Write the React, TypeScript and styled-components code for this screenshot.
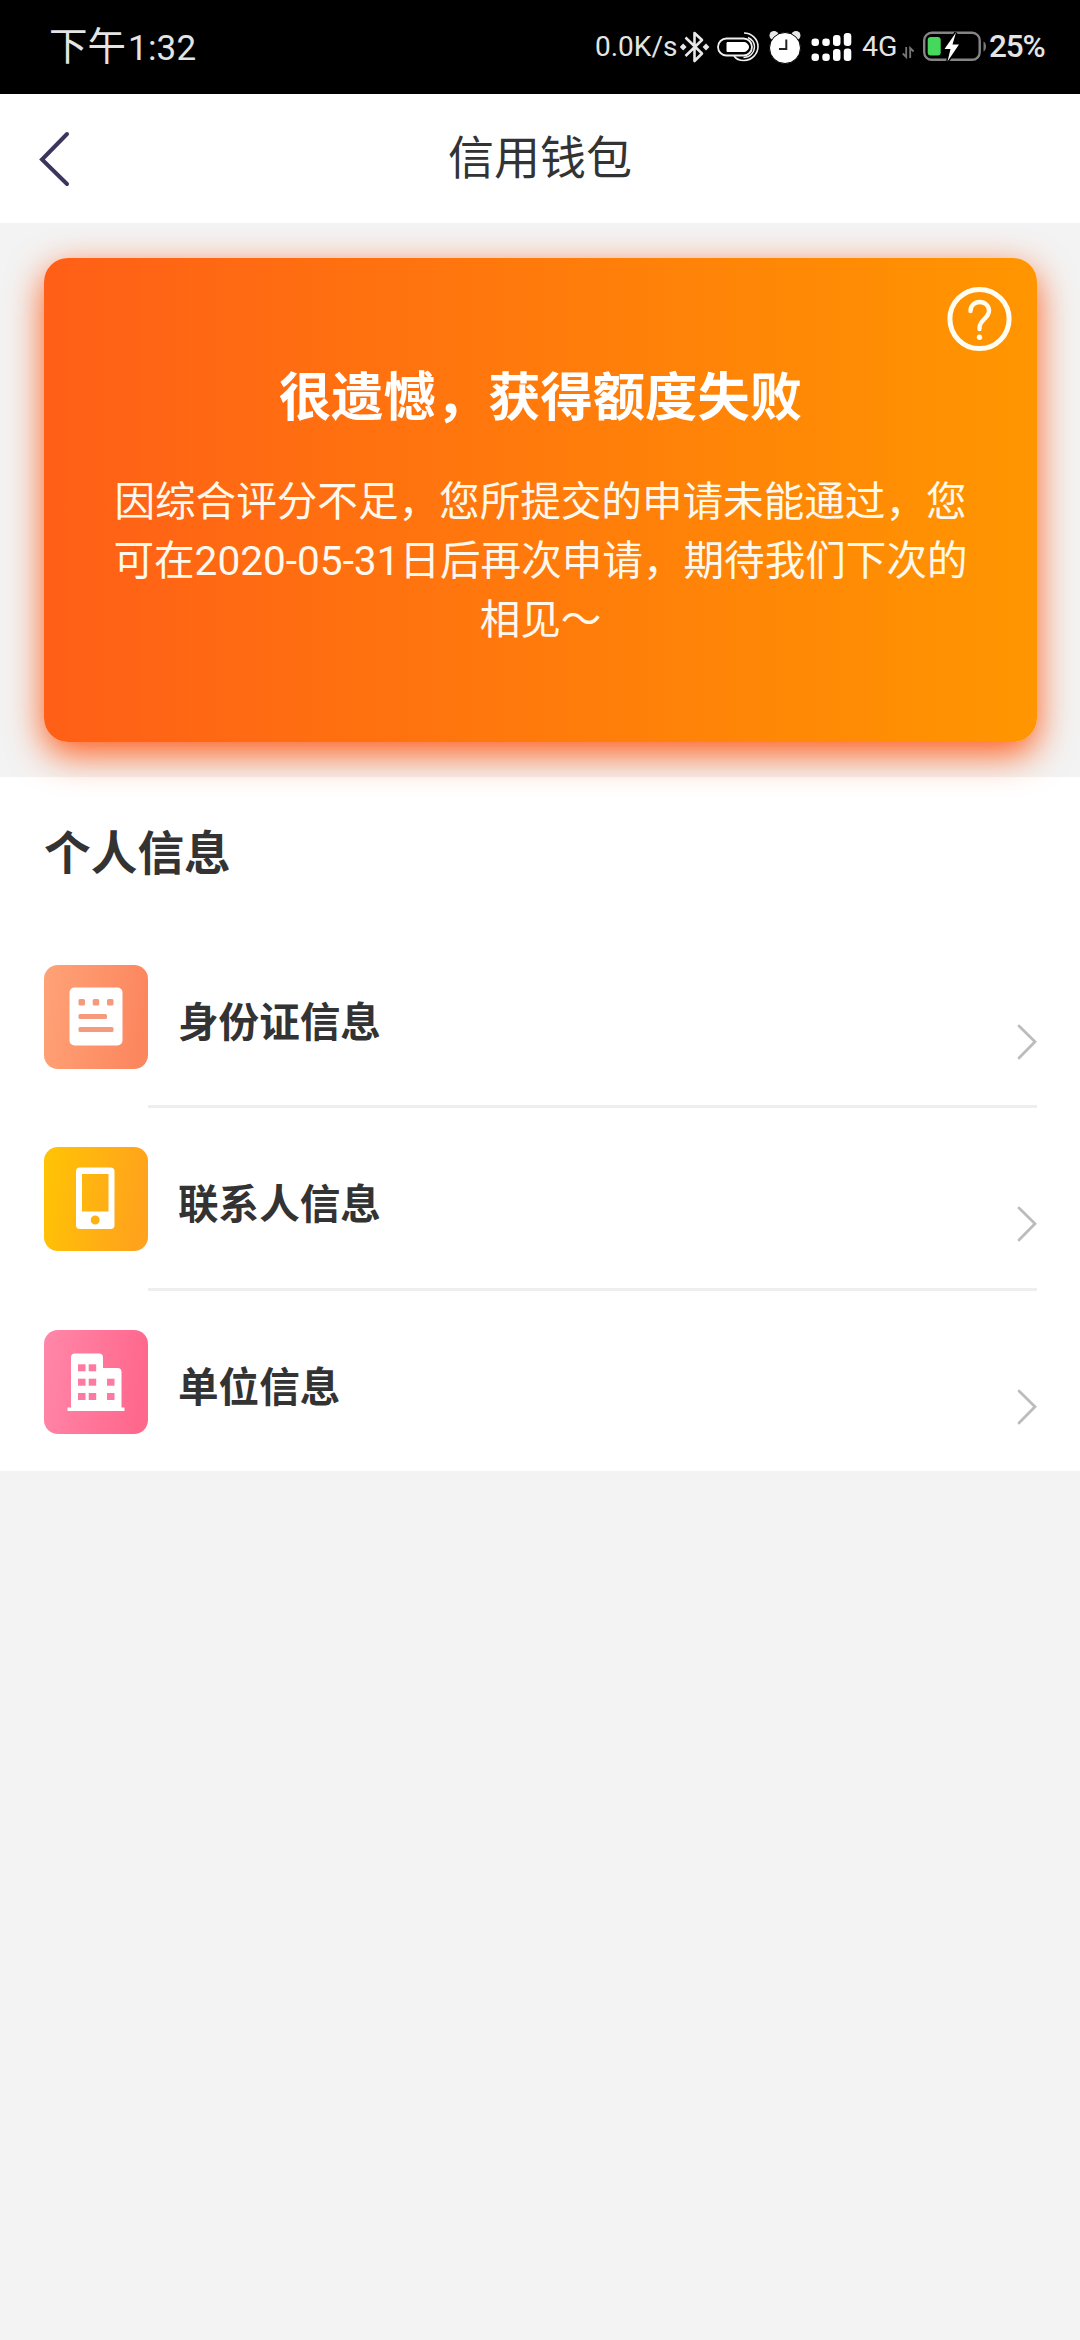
import React from 'react';
import styled, { createGlobalStyle } from 'styled-components';

const GlobalStyle = createGlobalStyle`
  * { box-sizing: border-box; }
  body {
    margin: 0;
    background: #f3f3f3;
    font-family: Roboto, "Noto Sans CJK SC", sans-serif;
    color: #333;
  }
  svg { display: block; flex: none; }
`;

const Page = styled.div`
  display: flex;
  flex-direction: column;
  width: 1080px;
  min-height: 2340px;
  background: #f3f3f3;
`;

const StatusBar = styled.header`
  display: flex;
  align-items: center;
  justify-content: space-between;
  height: 94px;
  padding: 0 37px 0 49px;
  background: #000;
  color: #e4e4e4;
  white-space: nowrap;
`;

const Clock = styled.div`
  display: flex;
  align-items: baseline;
  padding-top: 2px;
  font-size: 38.5px;
  line-height: 50px;
`;

const ClockDigits = styled.span`
  margin-left: 2px;
  font-size: 35px;
  letter-spacing: 0.2px;
`;

const StatusItems = styled.div`
  display: flex;
  align-items: center;
  height: 94px;
`;

const StatusText = styled.span<{ $width: number; $size: number; $weight?: number; $spacing?: number }>`
  width: ${(p) => p.$width}px;
  font-size: ${(p) => p.$size}px;
  font-weight: ${(p) => p.$weight ?? 400};
  letter-spacing: ${(p) => p.$spacing ?? 0}px;
  line-height: 94px;
`;

const NavBar = styled.nav`
  display: grid;
  grid-template-columns: 110px 1fr 110px;
  align-items: center;
  height: 129px;
  background: #fff;
`;

const BackButton = styled.button`
  display: flex;
  align-items: center;
  height: 127px;
  padding: 0 0 0 38px;
  border: 0;
  background: none;
`;

const NavTitle = styled.h1`
  margin: 0 0 2px;
  font-size: 46px;
  font-weight: 400;
  line-height: 60px;
  text-align: center;
`;

const CardArea = styled.section`
  height: 554px;
  padding: 35px 43px 0 44px;
`;

const Card = styled.div`
  position: relative;
  height: 484px;
  padding: 104px 60px 0;
  border-radius: 24px;
  background: linear-gradient(90deg, #ff5f17, #ff9600);
  box-shadow: 0 12px 36px #ff5c1a;
  color: #fff;
  text-align: center;
`;

const HelpButton = styled.button`
  position: absolute;
  top: 28px;
  right: 25px;
  padding: 0;
  border: 0;
  background: none;
`;

const CardTitle = styled.h2`
  margin: 0;
  font-size: 52.3px;
  font-weight: 700;
  line-height: 72px;
`;

const CardText = styled.p`
  margin: 39px 0 0;
  color: #fff8ec;
  font-size: 40.6px;
  line-height: 58.9px;
  white-space: nowrap;
`;

const Section = styled.section`
  height: 694px;
  background: #fff;
`;

const SectionTitle = styled.h3`
  margin: 0;
  padding: 45px 44px 0;
  height: 148.7px;
  font-size: 46.7px;
  font-weight: 700;
  line-height: 64px;
`;

const List = styled.ul`
  margin: 0;
  padding: 0 43px 0 44px;
  list-style: none;
`;

const Row = styled.li`
  display: flex;
  height: 182.5px;

  > svg { margin-top: 39px; }
`;

const RowBody = styled.div`
  display: flex;
  flex: 1;
  align-items: flex-start;
  justify-content: space-between;
  padding-left: 30px;
  border-bottom: 3px solid #eee;

  ${Row}:last-child & { border-bottom: 0; }

  > svg { margin-top: 97px; }
`;

const RowLabel = styled.span`
  margin-top: 67px;
  font-size: 40.6px;
  font-weight: 700;
  line-height: 60px;
`;

const BluetoothIcon = () => (
  <svg width="30" height="34" viewBox="0 0 30 34" fill="none" stroke="#e8e8e8" strokeWidth="2.600" strokeLinejoin="round">
    <path d="M5.500 7.500 22 23.500 14.500 31V3L22 10 5.500 26" />
    <path d="M3.200 13.600 6.600 17l-3.400 3.400L-.2 17zM26 13.600 29.400 17 26 20.400 22.600 17z" fill="#e8e8e8" stroke="none" />
  </svg>
);

const PillIcon = () => (
  <svg width="42" height="32" viewBox="0 0 42 32" fill="none" stroke="#f0f0f0">
    <rect x="1" y="7.500" width="34" height="17" rx="8.500" strokeWidth="1.800" />
    <path d="M10 11.500h17a4.500 4.500 0 0 1 0 9H10z" fill="#fff" stroke="#fff" />
    <path d="M27 2C35 2 41 8.500 41 15.500S35 29.500 27 29.500c-4.500 0-8-1.500-10-4.500" strokeWidth="1.600" />
    <path d="M31 6.500c3.800 1.800 6.500 5 6.500 9.300 0 6-5 10.700-11 10.700" strokeWidth="1.400" />
  </svg>
);

const AlarmIcon = () => (
  <svg width="32" height="34" viewBox="0 0 32 34">
    <circle cx="5" cy="5.500" r="4.500" fill="#e8e8e8" />
    <circle cx="27" cy="5.500" r="4.500" fill="#e8e8e8" />
    <circle cx="16" cy="18" r="15.500" fill="#fff" stroke="#000" strokeWidth="1" />
    <path d="M17.300 9.500V19H10" fill="none" stroke="#222" strokeWidth="2" />
  </svg>
);

const SignalIcon = () => (
  <svg width="42" height="30" viewBox="0 0 42 30" fill="#fff">
    <rect x="0.500" y="6.500" width="7.500" height="7.500" rx="3.200" />
    <rect x="11.300" y="6.500" width="7.500" height="7.500" rx="3.200" />
    <rect x="22" y="3" width="7.500" height="11" rx="3.200" />
    <rect x="32.800" y="1" width="7.500" height="13" rx="3.200" />
    <rect x="0.500" y="21.500" width="7.500" height="7.500" rx="3.200" />
    <rect x="11.300" y="21.500" width="7.500" height="7.500" rx="3.200" />
    <rect x="22" y="17" width="7.500" height="12" rx="3.200" />
    <rect x="32.800" y="16.500" width="7.500" height="12.500" rx="3.200" />
  </svg>
);

const DataArrowsIcon = () => (
  <svg width="13" height="34" viewBox="0 0 13 34" fill="none" stroke="#777" strokeWidth="1.800">
    <path d="M.8 23.500 4.200 27V17M8.200 28V18l3.400 3.500" />
  </svg>
);

const BatteryIcon = () => (
  <svg width="65" height="34" viewBox="0 0 65 34">
    <rect x="1.200" y="2.800" width="55.500" height="27" rx="7.500" fill="none" stroke="#858585" strokeWidth="2.400" />
    <path d="M60.500 11.500c3.400 1.500 3.400 8.500 0 10z" fill="#777" />
    <rect x="4.700" y="7" width="13" height="18.500" rx="3" fill="#45d85c" />
    <path d="M33 2.500 21.500 19h6L24.500 31.500 36 14.500h-6.500z" fill="#fff" stroke="#000" strokeWidth="3" paintOrder="stroke" />
  </svg>
);

const BackIcon = () => (
  <svg width="34" height="58" viewBox="0 0 34 58" fill="none" stroke="#3a365f" strokeWidth="4" strokeLinecap="round">
    <path d="M29 4 4 29.500 29 54" />
  </svg>
);

const HelpIcon = () => (
  <svg width="66" height="66" viewBox="0 0 66 66" fill="none" stroke="#fffdf2" strokeWidth="5" strokeLinecap="round">
    <circle cx="33.500" cy="33" r="29.600" />
    <path d="M24.500 25c0-5.300 4-9 9.200-9 5.300 0 9.300 3.700 9.300 8.800 0 7.500-9.500 9-9.500 17v1.200" strokeWidth="4.400" />
    <circle cx="33.500" cy="51.300" r="2.700" fill="#fffdf2" stroke="none" />
  </svg>
);

const ChevronIcon = () => (
  <svg width="20" height="38" viewBox="0 0 20 38" fill="none" stroke="#bcbcbc" strokeWidth="2.800" strokeLinecap="round">
    <path d="M2 3 18 18.800 2 35" />
  </svg>
);

interface TileProps {
  id: string;
  from: string;
  to: string;
  children: React.ReactNode;
}

const Tile = ({ id, from, to, children }: TileProps) => (
  <svg width="104" height="104" viewBox="0 0 104 104">
    <defs>
      <linearGradient id={id} x1="0" y1="0" x2="1" y2="0.150">
        <stop offset="0" stopColor={from} />
        <stop offset="1" stopColor={to} />
      </linearGradient>
    </defs>
    <rect width="104" height="104" rx="14" fill={`url(#${id})`} />
    {children}
  </svg>
);

const IdTile = () => (
  <Tile id="tile-id" from="#ffa277" to="#fc875f">
    <rect x="25.500" y="22.500" width="53" height="58" rx="5" fill="#fff" />
    <g fill="#f59a7c">
      <rect x="34.500" y="34" width="6.500" height="6.500" rx="1.500" />
      <rect x="48.700" y="34" width="6.500" height="6.500" rx="1.500" />
      <rect x="63" y="34" width="6.500" height="6.500" rx="1.500" />
      <rect x="34.500" y="49" width="28.500" height="5" rx="1.500" />
      <rect x="34.500" y="62" width="35" height="5" rx="1.500" />
    </g>
  </Tile>
);

const PhoneTile = () => (
  <Tile id="tile-phone" from="#ffc404" to="#ffa31c">
    <path
      d="M36 20.500h30.500a4 4 0 0 1 4 4V78a4 4 0 0 1-4 4H36a4 4 0 0 1-4-4V24.500a4 4 0 0 1 4-4zM38 27v37.500h26.500V27zM51.200 68.500a4.500 4.500 0 1 0 0 9 4.500 4.500 0 0 0 0-9z"
      fill="#fff"
      fillRule="evenodd"
    />
  </Tile>
);

const BuildingTile = () => (
  <Tile id="tile-building" from="#ff87a9" to="#ff688d">
    <path d="M31 23.500h24a4 4 0 0 1 4 4V38h14.500a4 4 0 0 1 4 4v35.500h3V81H23.500v-3.500H27v-50a4 4 0 0 1 4-4z" fill="#fff" />
    <g fill="#fd7ba0">
      <rect x="34" y="34.300" width="7.500" height="7" />
      <rect x="44.700" y="34.300" width="7.500" height="7" />
      <rect x="34" y="48.700" width="7.500" height="7" />
      <rect x="44.700" y="48.700" width="7.500" height="7" />
      <rect x="63" y="48.700" width="7.500" height="7" />
      <rect x="34" y="63" width="7.500" height="7" />
      <rect x="44.700" y="63" width="7.500" height="7" />
      <rect x="63" y="63" width="7.500" height="7" />
    </g>
  </Tile>
);

const items = [
  { label: '身份证信息', Icon: IdTile },
  { label: '联系人信息', Icon: PhoneTile },
  { label: '单位信息', Icon: BuildingTile },
];

const IconSlot = styled.span<{ $width: number }>`
  display: flex;
  width: ${(p) => p.$width}px;
`;

export default function App() {
  return (
    <Page>
      <GlobalStyle />
      <StatusBar>
        <Clock>
          下午<ClockDigits>1:32</ClockDigits>
        </Clock>
        <StatusItems>
          <StatusText $width={85} $size={28}>0.0K/s</StatusText>
          <IconSlot $width={37}><BluetoothIcon /></IconSlot>
          <IconSlot $width={52}><PillIcon /></IconSlot>
          <IconSlot $width={42}><AlarmIcon /></IconSlot>
          <IconSlot $width={51}><SignalIcon /></IconSlot>
          <StatusText $width={40} $size={28.5}>4G</StatusText>
          <IconSlot $width={21}><DataArrowsIcon /></IconSlot>
          <IconSlot $width={66}><BatteryIcon /></IconSlot>
          <StatusText $width={54} $size={31.5} $weight={500} $spacing={-1.2}>25%</StatusText>
        </StatusItems>
      </StatusBar>
      <NavBar>
        <BackButton aria-label="返回"><BackIcon /></BackButton>
        <NavTitle>信用钱包</NavTitle>
      </NavBar>
      <CardArea>
        <Card>
          <HelpButton aria-label="帮助"><HelpIcon /></HelpButton>
          <CardTitle>很遗憾，获得额度失败</CardTitle>
          <CardText>
            因综合评分不足，您所提交的申请未能通过，您
            <br />
            可在2020-05-31日后再次申请，期待我们下次的
            <br />
            相见～
          </CardText>
        </Card>
      </CardArea>
      <Section>
        <SectionTitle>个人信息</SectionTitle>
        <List>
          {items.map(({ label, Icon }) => (
            <Row key={label}>
              <Icon />
              <RowBody>
                <RowLabel>{label}</RowLabel>
                <ChevronIcon />
              </RowBody>
            </Row>
          ))}
        </List>
      </Section>
    </Page>
  );
}
